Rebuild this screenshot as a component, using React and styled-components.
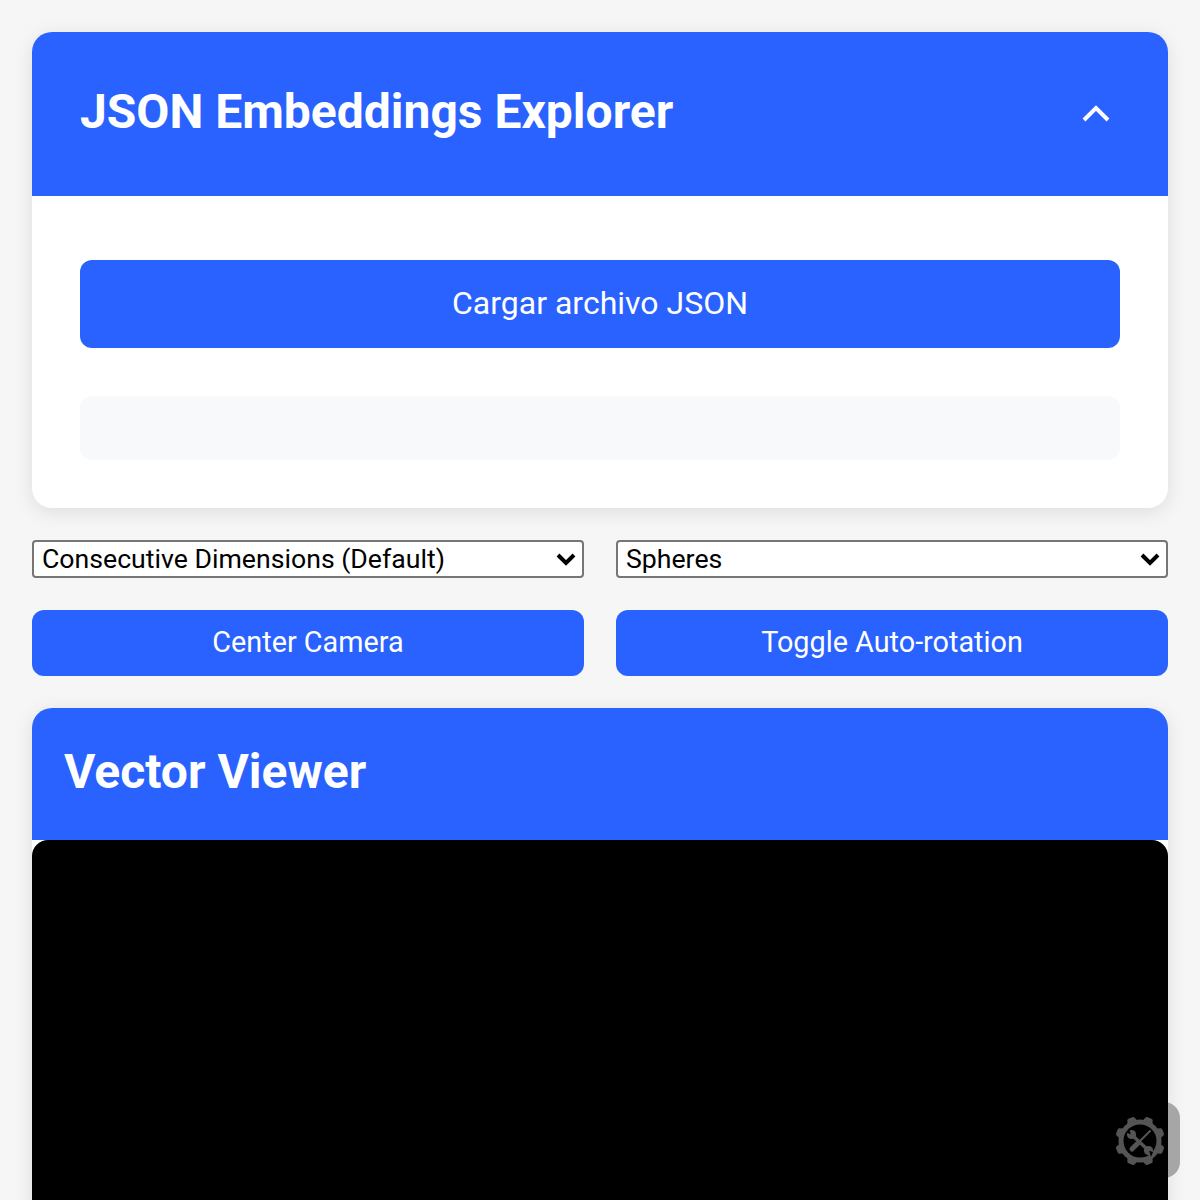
import React from 'react';
import styled, { createGlobalStyle } from 'styled-components';

const GlobalStyle = createGlobalStyle`
  html, body {
    margin: 0;
    height: 100vh;
    overflow: hidden;
    background: #f6f6f6;
    font-family: Roboto, "Liberation Sans", sans-serif;
  }
  * {
    box-sizing: border-box;
  }
`;

const Page = styled.div`
  display: flex;
  flex-direction: column;
  gap: 32px;
  padding: 32px;
`;

const Card = styled.section`
  background: #fff;
  border-radius: 20px;
  box-shadow: 0 4px 20px rgba(0, 0, 0, 0.1);
  overflow: hidden;
`;

const CardHeader = styled.header`
  display: flex;
  align-items: center;
  justify-content: space-between;
  height: 164px;
  padding: 0 48px;
  background: #2962ff;
`;

const Title = styled.h1`
  margin: 0 0 4px;
  color: #fff;
  font-size: 48px;
  font-weight: 700;
  line-height: 1.2;
`;

const ToggleIcon = styled.svg`
  width: 48px;
  height: 48px;
  fill: none;
  stroke: #fff;
  stroke-width: 2;
`;

const CardBody = styled.div`
  display: flex;
  flex-direction: column;
  gap: 48px;
  padding: 64px 48px 48px;
`;

const Button = styled.button`
  display: block;
  width: 100%;
  height: ${(p) => (p.$large ? '88px' : '66px')};
  padding: 0 0 2px;
  border: 0;
  border-radius: 12px;
  background: #2962ff;
  color: #fff;
  font-family: inherit;
  font-size: ${(p) => (p.$large ? '32px' : '28.8px')};
`;

const Placeholder = styled.div`
  height: 64px;
  border-radius: 12px;
  background: #f8f9fa;
`;

const TwoColumns = styled.div`
  display: grid;
  grid-template-columns: 1fr 1fr;
  gap: 32px;
`;

const SelectBox = styled.div`
  position: relative;
`;

const Select = styled.select`
  display: block;
  width: 100%;
  height: 38px;
  padding: 0 8px;
  border: 2px solid #767676;
  border-radius: 4px;
  appearance: none;
  background: #fff;
  color: #000;
  font-family: inherit;
  font-size: 26.67px;
`;

const Chevron = styled.svg`
  position: absolute;
  top: 11px;
  right: 6px;
  width: 24px;
  height: 16px;
  fill: none;
  stroke: #000;
  stroke-width: 4;
  pointer-events: none;
`;

const Viewer = styled.section`
  background: #fff;
  border-radius: 20px;
  box-shadow: 0 4px 20px rgba(0, 0, 0, 0.1);
`;

const ViewerHeader = styled.header`
  display: flex;
  align-items: center;
  height: 132px;
  padding: 0 32px 4px;
  border-radius: 20px 20px 0 0;
  background: #2962ff;
`;

const ViewerTitle = styled.h2`
  margin: 0;
  color: #fff;
  font-size: 48px;
  font-weight: 700;
  line-height: 1.2;
`;

const Canvas = styled.div`
  position: relative;
  z-index: 1;
  height: 600px;
  border-radius: 16px;
  background: #000;
`;

const ToolTab = styled.div`
  position: fixed;
  right: 20px;
  bottom: 22px;
  width: 40px;
  height: 76px;
  border-radius: 0 16px 16px 0;
  background: #a6a6a6;
`;

const ToolIcon = styled.svg`
  position: fixed;
  z-index: 2;
  right: 33px;
  bottom: 32px;
  width: 54px;
  height: 54px;
  color: #555;
`;

const teeth = [0, 45, 90, 135, 180, 225, 270, 315];

const SelectField = ({ label }) => (
  <SelectBox>
    <Select>
      <option>{label}</option>
    </Select>
    <Chevron viewBox="0 0 24 16">
      <path d="M4 4l8 8 8-8" />
    </Chevron>
  </SelectBox>
);

const GearIcon = () => (
  <ToolIcon viewBox="0 0 54 54">
    <circle cx="27" cy="27" r="19" fill="none" stroke="currentColor" strokeWidth="5" />
    {teeth.map((a) => (
      <path
        key={a}
        d="M21.5 8L23 3.5Q23.4 2 25 2h4q1.6 0 2 1.5L32.5 8z"
        fill="currentColor"
        transform={`rotate(${a + 22.5} 27 27)`}
      />
    ))}
    {/* screwdriver */}
    <path d="M37 17L27 27" stroke="currentColor" strokeWidth="2" strokeLinecap="round" />
    <path d="M25 29l-6 6" stroke="currentColor" strokeWidth="5" strokeLinecap="round" />
    {/* wrench, the notches are cut in canvas black */}
    <path d="M19 21l16 15" stroke="currentColor" strokeWidth="3.4" />
    <circle cx="18.5" cy="20.5" r="4.6" fill="currentColor" />
    <circle cx="35.5" cy="36.5" r="4.6" fill="currentColor" />
    <path d="M17.8 20.2L14 19l2-5z" fill="#000" />
    <path d="M36.2 36.8L40 38l-2 5z" fill="#000" />
  </ToolIcon>
);

const App = () => (
  <>
    <GlobalStyle />
    <Page>
      <Card>
        <CardHeader>
          <Title>JSON Embeddings Explorer</Title>
          <ToggleIcon viewBox="0 0 24 24">
            <path d="M6 15l6-6 6 6" />
          </ToggleIcon>
        </CardHeader>
        <CardBody>
          <Button $large>Cargar archivo JSON</Button>
          <Placeholder />
        </CardBody>
      </Card>
      <TwoColumns>
        <SelectField label="Consecutive Dimensions (Default)" />
        <SelectField label="Spheres" />
      </TwoColumns>
      <TwoColumns>
        <Button>Center Camera</Button>
        <Button>Toggle Auto-rotation</Button>
      </TwoColumns>
      <Viewer>
        <ViewerHeader>
          <ViewerTitle>Vector Viewer</ViewerTitle>
        </ViewerHeader>
        <Canvas />
      </Viewer>
    </Page>
    <ToolTab />
    <GearIcon />
  </>
);

export default App;
